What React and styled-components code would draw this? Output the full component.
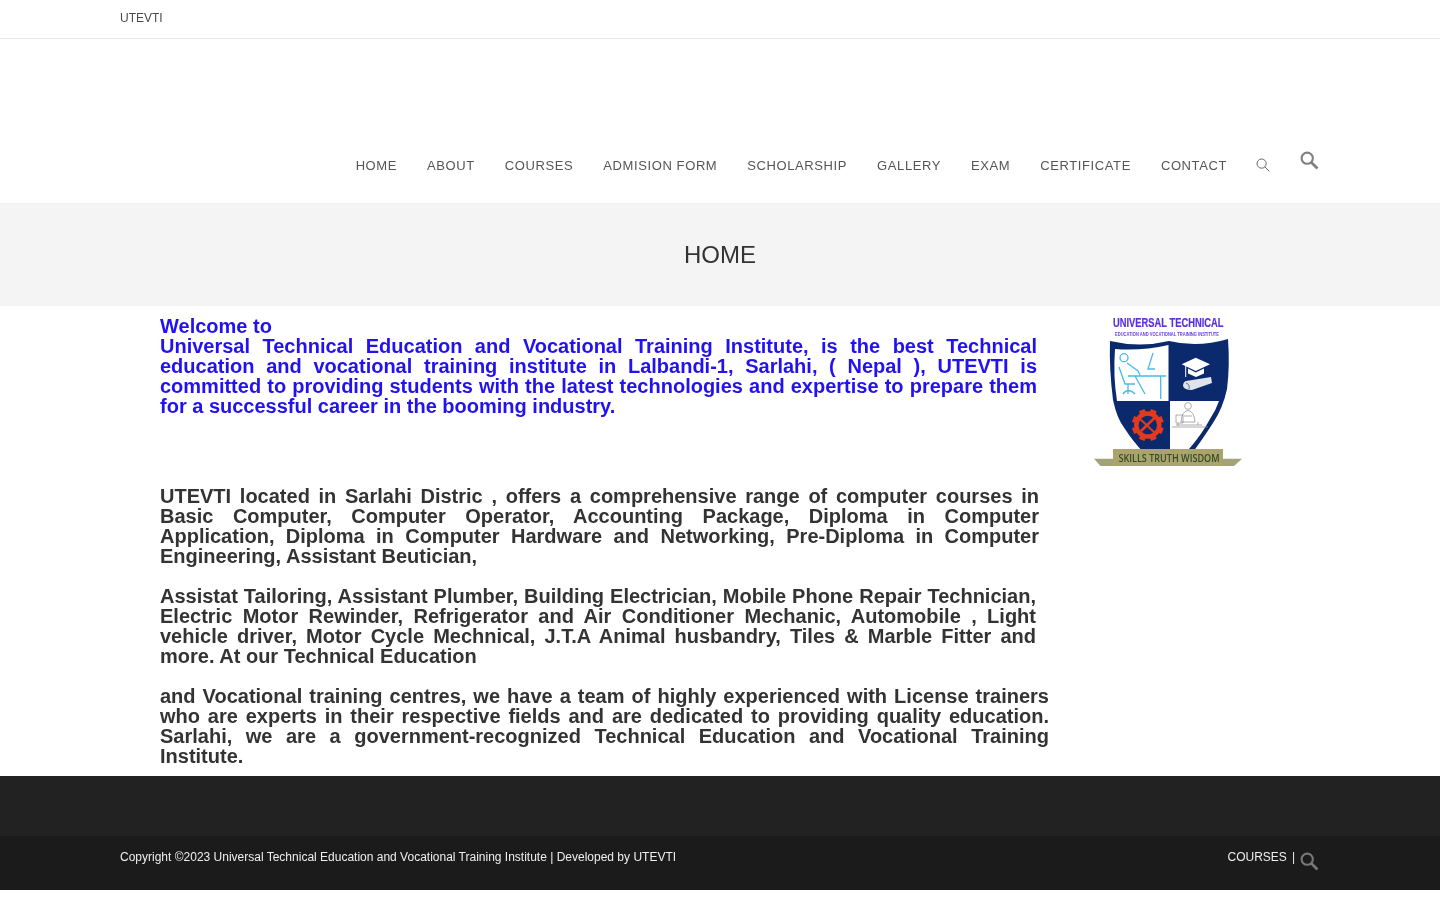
import React from "react";
import styled, { createGlobalStyle } from "styled-components";

const Global = createGlobalStyle`
  html, body { margin: 0; padding: 0; background: #fff; }
  body {
    font-family: "Liberation Sans", Arial, sans-serif;
    color: #333;
  }
  #root { will-change: transform; }
  * { box-sizing: border-box; }
`;

const TopBar = styled.div`
  height: 39px;
  border-bottom: 1px solid #eaeaea;
  padding-bottom: 2px;
  display: flex;
  align-items: center;
`;
const Wrap = styled.div`
  width: 1200px;
  margin: 0 auto;
  display: flex;
  align-items: center;
  justify-content: ${(p) => p.$justify || "flex-start"};
`;
const TopText = styled.span`
  font-size: 12px;
  line-height: 18px;
  color: #4a4a4a;
`;
const Header = styled.header`
  height: 164px;
  padding-top: 112px;
`;
const Nav = styled.nav`
  display: flex;
  align-items: center;
  height: 30px;
`;
const NavLink = styled.a`
  font-size: 13px;
  letter-spacing: 0.6px;
  color: #555;
  padding: 0 15px;
  line-height: 30px;
  white-space: nowrap;
`;
const NavSearch = styled.span`
  display: flex;
  padding: 0 15px 0 14px;
  margin-top: -3px;
`;
const HeaderSearch = styled.span`
  display: flex;
  align-self: flex-start;
  margin: 0 1px 0 15px;
`;
const FooterSearch = styled.span`
  display: flex;
  margin: 4px 1px 0 0;
`;
const TitleBand = styled.div`
  height: 103px;
  background: #f4f4f4;
  border-top: 1px solid #f1f1f1;
  display: flex;
  align-items: center;
  justify-content: center;
`;
const Title = styled.h1`
  margin: 0;
  font-size: 24px;
  font-weight: 400;
  line-height: 32px;
  color: #333;
`;
const Content = styled.main`
  height: 470px;
  width: 1280px;
  margin: 0 auto;
  padding-left: 80px;
  display: flex;
`;
const Article = styled.div`
  width: 920px;
  padding-top: 10px;
  flex: none;
`;
const Para = styled.p`
  margin: ${(p) => p.$mt || "20px"} 0 0;
  width: ${(p) => p.$w}px;
  font-size: 20px;
  line-height: 20px;
  font-weight: 700;
  text-align: justify;
  color: ${(p) => p.$color || "#333"};
`;
const Lead = styled(Para)`
  margin: 0 0 70px;
`;
const Side = styled.aside`
  flex: none;
  filter: blur(0.35px);
`;
const WidgetBar = styled.div`
  height: 60px;
  background: #222;
`;
const BottomBar = styled.footer`
  height: 54px;
  background: #1b1b1b;
  font-size: 12px;
`;
const BottomWrap = styled(Wrap)`
  height: 54px;
  align-items: flex-start;
  padding-top: 12px;
`;
const Copy = styled.span`
  line-height: 18px;
  color: #eee;
`;
const Right = styled.span`
  display: flex;
  align-items: flex-start;
  line-height: 18px;
  color: #eee;
`;
const Sep = styled.span`
  margin: 0 5px 0 5px;
`;

const ThinSearch = () => (
  <svg width="14" height="14" viewBox="0 0 14 14" fill="none" stroke="#666" strokeWidth="1">
    <circle cx="5.6" cy="5.600" r="4.600" />
    <path d="M8.900 8.900l4.500 4.500" />
  </svg>
);
const ThickSearch = ({ color }) => (
  <svg width="19" height="19" viewBox="0 0 20 20" fill="none" stroke={color} strokeWidth="2.2">
    <circle cx="7.600" cy="7.600" r="5.900" />
    <path d="M11.800 11.800l6.600 6.600" strokeWidth="2.800" />
  </svg>
);

const teeth = [0, 45, 90, 135, 180, 225, 270, 315];

const Logo = () => (
  <svg width="180" height="170" viewBox="0 0 180 170">
    <text transform="translate(33 20.500) scale(0.72 1)" fontFamily="Liberation Sans" fontWeight="700" fontSize="13" fill="#5a30e0" stroke="#5a30e0" strokeWidth="0.250">UNIVERSAL TECHNICAL</text>
    <text transform="translate(35 29.500) scale(0.656 1)" fontFamily="Liberation Sans" fontWeight="700" fontSize="6.200" fill="#6a40e0">EDUCATION AND VOCATIONAL TRAINING INSTITUTE</text>

    <path d="M30 35Q60 42 89 35Q118 42 148 33Q150 60 147 83Q143 102 133 117Q122 134 113 146H63Q52 134 45 123Q37 113 33 94Q29 62 30 35Z" fill="#0b2a6e" />
    <path d="M35 43Q62 45 88.500 39V95H37Q33 70 35 43Z" fill="#fff" />
    <path d="M90 95H139Q136 104 130 113Q122 128 109 143H90Z" fill="#fff" />

    <g fill="none" stroke="#4ab9e9" strokeWidth="1.300">
      <circle cx="44" cy="51.700" r="4" />
      <path d="M39 61L45 78H55M47 57L58 65L60 69M48 70H86M80.700 70V93M73 47L68 63H75M55 70L65 88M48 78V88M43 88Q48 81 55 88" />
    </g>

    <path d="M101.700 58.300L115.700 51.700L130 58.300L115.700 65Z" fill="#fff" />
    <path d="M108 62.500V67.500L116 71L124 67.500V62.500L115.700 66.500Z" fill="#fff" />
    <path d="M105.700 60V71" stroke="#fff" strokeWidth="1" />
    <path d="M106 75L131 71L132 77L112 84Q104 84 103 80Q103 76 106 75Z" fill="#dfe3ea" />
    <path d="M106 77Q110 78 109 83" stroke="#0b2a6e" strokeWidth="0.600" fill="none" />

    <g fill="none" stroke="#8a8a8a" strokeWidth="0.700">
      <circle cx="108" cy="100" r="3.400" />
      <path d="M101 116Q102 105 108 104.500Q114 105 115 116ZM104 110H112M96 109H103V117H96ZM98 117V120M92 121H128M96 119H122M118 116V119" />
    </g>

    {teeth.map((a) => (
      <rect key={a} x="64.800" y="103" width="6" height="6" fill="#e4391c" transform={`rotate(${a + 22.500} 67.800 119)`} />
    ))}
    <circle cx="67.800" cy="119" r="11.500" fill="#0b2a6e" stroke="#e4391c" strokeWidth="4.500" />
    <path d="M59 112L75 127" stroke="#e4391c" strokeWidth="2" />
    <path d="M75.500 111L61 125" stroke="#e4391c" strokeWidth="2.600" />

    <path d="M14 152.700H33V160H20.500Z" fill="#a3a27a" />
    <path d="M162 152.700H143V160H154Z" fill="#a3a27a" />
    <rect x="33" y="143" width="110" height="17" fill="#aaa46c" />
    <text x="89" y="156" textAnchor="middle" fontFamily="Open Sans" fontSize="10" fontWeight="600" fill="#2f4a28" textLength="101" lengthAdjust="spacingAndGlyphs">SKILLS TRUTH WISDOM</text>
  </svg>
);

const links = ["HOME", "ABOUT", "COURSES", "ADMISION FORM", "SCHOLARSHIP", "GALLERY", "EXAM", "CERTIFICATE", "CONTACT"];

export default function App() {
  return (
    <>
      <Global />
      <TopBar>
        <Wrap>
          <TopText>UTEVTI</TopText>
        </Wrap>
      </TopBar>
      <Header>
        <Wrap $justify="flex-end">
          <Nav>
            {links.map((l) => (
              <NavLink key={l}>{l}</NavLink>
            ))}
            <NavSearch>
              <ThinSearch />
            </NavSearch>
            <HeaderSearch>
              <ThickSearch color="#808080" />
            </HeaderSearch>
          </Nav>
        </Wrap>
      </Header>
      <TitleBand>
        <Title>HOME</Title>
      </TitleBand>
      <Content>
        <Article>
          <Lead $color="#2211f0" $w={877}>
            Welcome to
            <br />
            Universal Technical Education and Vocational Training Institute, is the best Technical education and vocational training institute in Lalbandi-1, Sarlahi, ( Nepal ), UTEVTI is committed to providing students with the latest technologies and expertise to prepare them for a successful career in the booming industry.
          </Lead>
          <Para $w={879} $mt="0">
            UTEVTI located in Sarlahi Distric , offers a comprehensive range of computer courses in Basic Computer, Computer Operator, Accounting Package, Diploma in Computer Application, Diploma in Computer Hardware and Networking, Pre-Diploma in Computer Engineering, Assistant Beutician,
          </Para>
          <Para $w={876}>
            Assistat Tailoring, Assistant Plumber, Building Electrician, Mobile Phone Repair Technician, Electric Motor Rewinder, Refrigerator and Air Conditioner Mechanic, Automobile , Light vehicle driver, Motor Cycle Mechnical, J.T.A Animal husbandry, Tiles &amp; Marble Fitter and more. At our Technical Education
          </Para>
          <Para $w={889}>
            and Vocational training centres, we have a team of highly experienced with License trainers who are experts in their respective fields and are dedicated to providing quality education. Sarlahi, we are a government-recognized Technical Education and Vocational Training Institute.
          </Para>
        </Article>
        <Side>
          <Logo />
        </Side>
      </Content>
      <WidgetBar />
      <BottomBar>
        <BottomWrap $justify="space-between">
          <Copy>Copyright ©2023 Universal Technical Education and Vocational Training Institute | Developed by UTEVTI</Copy>
          <Right>
            COURSES
            <Sep>|</Sep>
            <FooterSearch>
              <ThickSearch color="#777" />
            </FooterSearch>
          </Right>
        </BottomWrap>
      </BottomBar>
    </>
  );
}
